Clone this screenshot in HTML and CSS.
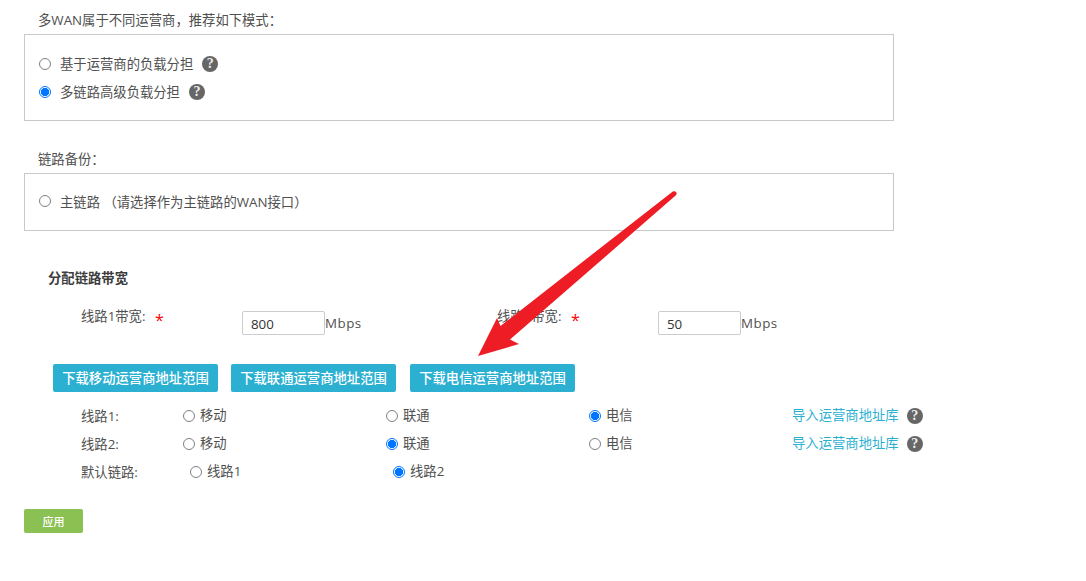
FILE: index.html
```html
<!DOCTYPE html>
<html lang="zh-CN">
<head>
<meta charset="utf-8">
<title>多WAN设置</title>
<link rel="stylesheet" href="styles.css">
</head>
<body>
<main class="page">
  <p class="section-label first">多WAN属于不同运营商，推荐如下模式：</p>
  <div class="box box-mode">
    <label class="option"><input type="radio" name="mode"><span>基于运营商的负载分担</span><i class="help">?</i></label>
    <label class="option"><input type="radio" name="mode" checked><span>多链路高级负载分担</span><i class="help">?</i></label>
  </div>
  <p class="section-label second">链路备份：</p>
  <div class="box box-backup">
    <label class="option"><input type="radio" name="main"><span>主链路 （请选择作为主链路的WAN接口）</span></label>
  </div>

  <h2 class="heading">分配链路带宽</h2>
  <div class="bandwidth">
    <div class="bw-item">
      <span class="bw-label">线路1带宽:</span><span class="star">*</span>
      <input class="bw-input" type="text" value="800"><span class="unit">Mbps</span>
    </div>
    <div class="bw-item">
      <span class="bw-label">线路2带宽:</span><span class="star">*</span>
      <input class="bw-input" type="text" value="50"><span class="unit">Mbps</span>
    </div>
  </div>

  <div class="downloads">
    <button class="btn-blue" type="button">下载移动运营商地址范围</button>
    <button class="btn-blue" type="button">下载联通运营商地址范围</button>
    <button class="btn-blue btn-last" type="button">下载电信运营商地址范围</button>
  </div>

  <div class="isp-row">
    <span class="isp-label">线路1:</span>
    <label class="choice"><input type="radio" name="l1"><span>移动</span></label>
    <label class="choice"><input type="radio" name="l1"><span>联通</span></label>
    <label class="choice"><input type="radio" name="l1" checked><span>电信</span></label>
    <span class="import"><a href="#">导入运营商地址库</a><i class="help">?</i></span>
  </div>
  <div class="isp-row">
    <span class="isp-label">线路2:</span>
    <label class="choice"><input type="radio" name="l2"><span>移动</span></label>
    <label class="choice"><input type="radio" name="l2" checked><span>联通</span></label>
    <label class="choice"><input type="radio" name="l2"><span>电信</span></label>
    <span class="import"><a href="#">导入运营商地址库</a><i class="help">?</i></span>
  </div>
  <div class="isp-row default-row">
    <span class="isp-label">默认链路:</span>
    <label class="choice"><input type="radio" name="d"><span>线路1</span></label>
    <label class="choice"><input type="radio" name="d" checked><span>线路2</span></label>
  </div>

  <button class="btn-apply" type="button">应用</button>
</main>

<svg class="arrow" width="1086" height="581" viewBox="0 0 1086 581" aria-hidden="true">
  <path d="M672.8 191.4 Q675 190.6 676.4 192.4 Q677.2 194.2 675.6 195.6 L510 339.5 L519 344 L478 356 L497 318 L500.5 326 Z" fill="#ee1c25"/>
</svg>
</body>
</html>
```

FILE: styles.css
```css
* { box-sizing: border-box; }
html, body { margin: 0; padding: 0; background: #fff; }
body {
  font-family: "Open Sans", "Noto Sans CJK SC", sans-serif;
  font-size: 13.33px;
  color: #505050;
  overflow: hidden;
}
.page { width: 1086px; height: 581px; padding-left: 24px; }
.section-label { margin: 0; line-height: 18px; height: 18px; padding-left: 14px; }
.section-label.first { margin-top: 11px; margin-bottom: 5px; }
.section-label.second { margin-top: 29px; margin-bottom: 5px; }
.box {
  width: 870px;
  border: 1px solid #c9c9c9;
  display: flex;
  flex-direction: column;
  padding-left: 14px;
}
.box-mode { height: 87px; padding-top: 19px; gap: 10px; }
.box-backup { height: 58px; padding-top: 18px; }
.option { display: flex; align-items: center; height: 18px; }
input[type="radio"] {
  appearance: none;
  margin: 0;
  width: 12px;
  height: 12px;
  flex: none;
  border: 1px solid #808080;
  border-radius: 50%;
  background: #fff;
}
input[type="radio"]:checked {
  border-color: #0075ff;
  background: radial-gradient(circle, #0075ff 0 3.8px, #fff 4.4px);
}
.option input { margin-right: 9px; }
.box-mode .option input { margin-top: 2px; }
.help {
  display: inline-block;
  width: 16px;
  height: 16px;
  border-radius: 50%;
  background: #666;
  color: #eee;
  font: bold 14px/16px "Liberation Serif", serif;
  text-align: center;
  margin-left: 9px;
  flex: none;
}
.box-mode .help { margin-top: 2px; }
.heading {
  margin: 38px 0 0 24px;
  font-size: 13.33px;
  line-height: 18px;
  font-weight: 700;
  color: #3c3c3c;
}
.bandwidth { display: flex; margin: 24px 0 0 57px; height: 24px; }
.bw-item { width: 416px; display: flex; align-items: flex-start; }
.bw-label { width: 74px; line-height: 10px; white-space: nowrap; }
.star { width: 87px; color: #f00; font-size: 16px; line-height: 18px; }
.bw-input {
  width: 83px;
  height: 24px;
  border: 1px solid #ccc;
  border-radius: 2px;
  padding: 1px 8px 0;
  font: 13.33px "Open Sans", sans-serif;
  color: #333;
  background: #fff;
  outline: none;
}
.unit { line-height: 24px; letter-spacing: 0.5px; }
.downloads { display: flex; gap: 13px; margin: 29px 0 0 29px; }
.btn-blue {
  width: 165px;
  height: 28px;
  padding: 0;
  border: 0;
  border-radius: 2px;
  background: #2cb0d2;
  color: #fff;
  font: 500 13.33px/28px "Noto Sans CJK SC", sans-serif;
}
.btn-last { margin-left: 1px; }
.isp-row {
  display: grid;
  grid-template-columns: 102px 203px 203px 203px auto;
  align-items: center;
  margin-left: 57px;
  height: 28px;
}
.downloads + .isp-row { margin-top: 8px; }
.choice { display: flex; align-items: center; gap: 5px; }
.choice input { margin-top: 4px; }
.isp-label { margin-top: 2px; }
.default-row { grid-template-columns: 109px 203px 203px; }
.import { display: flex; align-items: center; }
.import a { color: #2cb0d2; text-decoration: none; }
.import .help { margin-left: 8px; margin-top: 4px; }
.btn-apply {
  display: block;
  width: 59px;
  height: 24px;
  margin-top: 25px;
  padding: 0;
  border: 0;
  border-radius: 2px;
  background: #8bc152;
  color: #fff;
  font: 500 11px/24px "Noto Sans CJK SC", sans-serif;
}
.arrow { position: absolute; left: 0; top: 0; pointer-events: none; }
```
